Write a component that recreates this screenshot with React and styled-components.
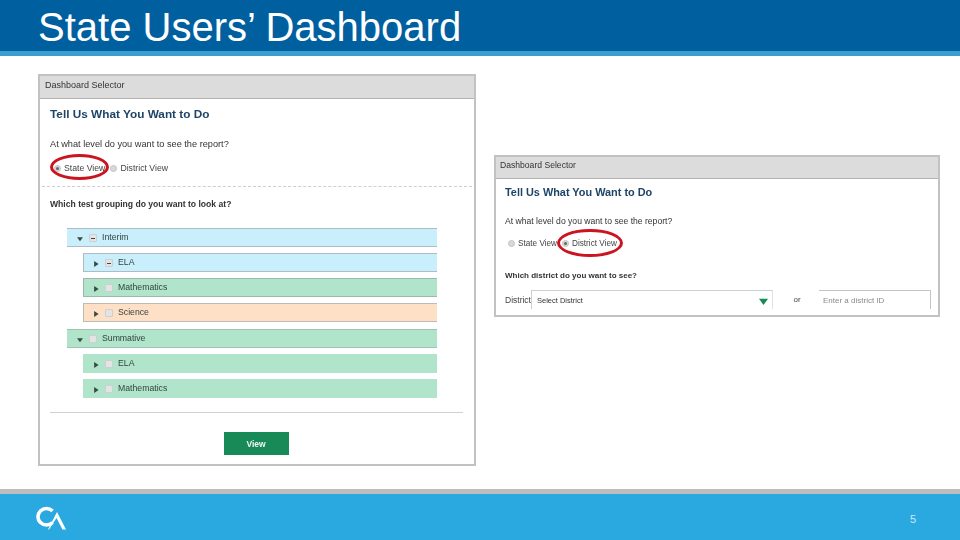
import styled, { createGlobalStyle } from "styled-components"

const GlobalStyle = createGlobalStyle`
  html, body {
    margin: 0;
    padding: 0;
    background: #fff;
  }
  * {
    box-sizing: border-box;
  }
`

const Slide = styled.div`
  width: 960px;
  height: 540px;
  display: flex;
  flex-direction: column;
  font-family: "Liberation Sans", Arial, sans-serif;
  overflow: hidden;
`

const Header = styled.header`
  height: 56px;
  flex-shrink: 0;
  background: #00609f;
  border-bottom: 5px solid #3a9fd0;
  padding-left: 38px;
`

const SlideTitle = styled.h1`
  margin: 0;
  font-size: 40px;
  font-weight: 400;
  line-height: 54px;
  color: #fff;
`

const Main = styled.main`
  flex: 1;
  display: flex;
  align-items: flex-start;
  gap: 18px;
  padding: 18px 20px 0 38px;
`

const Panel = styled.section`
  width: ${props => props.$width}px;
  height: ${props => props.$height}px;
  margin-top: ${props => props.$top || 0}px;
  flex-shrink: 0;
  display: flex;
  flex-direction: column;
  border: 2px solid #c2c2c2;
  background: #fff;
  filter: blur(0.45px);
`

const PanelHeader = styled.div`
  height: ${props => props.$height}px;
  flex-shrink: 0;
  display: flex;
  align-items: center;
  padding: 0 0 5px ${props => props.$left}px;
  background: #dcdcdc;
  border-bottom: 1px solid #b4b4b4;
  font-size: ${props => props.$size}px;
  color: #333;
`

const PanelBody = styled.div`
  flex: 1;
  display: flex;
  flex-direction: column;
  padding: ${props => props.$padding};
`

const Heading = styled.h2`
  margin: 0;
  font-size: ${props => props.$size}px;
  line-height: 14px;
  font-weight: 700;
  color: #1e4468;
`

const Question = styled.p`
  margin: ${props => props.$top}px 0 0;
  font-size: ${props => props.$size}px;
  line-height: 12px;
  font-weight: ${props => (props.$bold ? 700 : 400)};
  color: #333;
`

const RadioRow = styled.div`
  margin: ${props => props.$top}px 0 0 ${props => props.$left || 0}px;
  display: flex;
  align-items: center;
  height: 12px;
  font-size: ${props => props.$size}px;
  color: #444;
`

const Radio = styled.span`
  position: relative;
  width: 7px;
  height: 7px;
  margin-right: 3px;
  flex-shrink: 0;
  border-radius: 50%;
  background: #d8d8d8;
  border: 1px solid #c4c4c4;

  &::after {
    content: "";
    display: ${props => (props.$checked ? "block" : "none")};
    position: absolute;
    inset: 1px;
    border-radius: 50%;
    background: #666;
  }
`

const RadioLabel = styled.span`
  position: relative;
  margin-right: ${props => props.$gap}px;
`

const Circled = styled.span`
  position: absolute;
  left: ${props => props.$left}px;
  top: ${props => props.$top}px;
  width: ${props => props.$width}px;
  height: ${props => props.$height}px;
  border: 3px solid #cc1420;
  border-radius: 50%;
  pointer-events: none;
`

const DashedRule = styled.div`
  margin: 12px -8px 0 -8px;
  border-top: 1px dashed #cfcfcf;
`

const Tree = styled.div`
  margin: 18px 0 0 17px;
  width: 370px;
  display: flex;
  flex-direction: column;
`

const TreeRow = styled.div`
  height: 19px;
  margin-left: ${props => (props.$child ? 16 : 0)}px;
  margin-top: ${props => props.$gap}px;
  display: flex;
  align-items: center;
  padding-left: ${props => (props.$child ? 9 : 10)}px;
  background: ${props => props.$bg};
  border-top: 1px solid ${props => props.$line};
  border-bottom: 1px solid ${props => props.$line};
  border-left: ${props => (props.$child ? `1px solid ${props.$line}` : "none")};
  font-size: 8.7px;
  color: #33423c;
`

const Box = styled.span`
  width: 8px;
  height: 8px;
  margin: 1px 4px 0 6px;
  flex-shrink: 0;
  display: flex;
  align-items: center;
  justify-content: center;
  background: #e4e4e4;
  border: 1px solid #cfcfcf;
  border-radius: 1px;

  &::after {
    content: "";
    display: ${props => (props.$partial ? "block" : "none")};
    width: 4px;
    height: 1px;
    background: #444;
  }
`

const RowLabel = styled.span`
  margin: -2px 0 0 1px;
`

const FooterRule = styled.div`
  margin: 14px 1px 0 0;
  border-top: 1px solid #d0d0d0;
`

const ViewButton = styled.button`
  align-self: center;
  margin: 19px 2px 0 0;
  width: 65px;
  height: 23px;
  border: none;
  padding: 0;
  background: #188a57;
  color: #f0f7f3;
  font-family: inherit;
  font-size: 8.5px;
  font-weight: 700;
`

const DistrictRow = styled.div`
  margin-top: 8px;
  display: flex;
  align-items: center;
  font-size: 8.5px;
  color: #444;
`

const DistrictLabel = styled.span`
  width: 26px;
  flex-shrink: 0;
`

const SelectBox = styled.div`
  width: 242px;
  height: 19px;
  flex-shrink: 0;
  display: flex;
  align-items: center;
  justify-content: space-between;
  padding: 0 4px 0 5px;
  border-top: 1px solid #cfcfcf;
  border-left: 1px solid #cfcfcf;
  border-right: 1px solid #e2e2e2;
  font-size: 7.5px;
  color: #333;
`

const OrText = styled.span`
  width: 46px;
  flex-shrink: 0;
  padding-left: 2px;
  text-align: center;
  font-size: 8px;
`

const IdInput = styled.div`
  width: 112px;
  height: 19px;
  flex-shrink: 0;
  display: flex;
  align-items: center;
  padding-left: 4px;
  border-top: 1px solid #c4c4c4;
  border-right: 1px solid #c4c4c4;
  font-size: 8px;
  color: #8a8a8a;
`

const Footer = styled.footer`
  height: 51px;
  flex-shrink: 0;
  display: flex;
  align-items: center;
  justify-content: space-between;
  padding: 3px 44px 0 36px;
  background: #29a9e0;
  border-top: 5px solid #bdbdbd;
`

const PageNumber = styled.span`
  font-size: 11px;
  color: #cde9f7;
`

const Triangle = ({ open, color = "#3c4a44", size = 6 }) => (
  <svg width={size} height={size} viewBox="0 0 8 8" style={{ flexShrink: 0, marginTop: 3 }}>
    <path d={open ? "M0 1.5H8L4 7Z" : "M1.5 0L7.5 4L1.5 8Z"} fill={color} />
  </svg>
)

const Logo = () => (
  <svg width="31" height="25" viewBox="0 0 31 25">
    <path d="M16.5 5A8.5 8.2 0 1 0 16.5 16.5" fill="none" stroke="#fff" strokeWidth="3.6" />
    <path d="M12 23.5L21 6L30 23.5H26.5L20.5 12L13 23.5Z" fill="#fff" />
  </svg>
)

const rows = [
  { label: "Interim", open: true, bg: "#c9eefc", line: "#b0bcc2", partial: true, gap: 0 },
  { label: "ELA", child: true, bg: "#c9eefc", line: "#b0bcc2", partial: true, gap: 6 },
  { label: "Mathematics", child: true, bg: "#b0e4cb", line: "#a0b8ac", gap: 6 },
  { label: "Science", child: true, bg: "#fde0c6", line: "#bcbcb4", gap: 6 },
  { label: "Summative", open: true, bg: "#b0e4cb", line: "#a0c4b0", gap: 7 },
  { label: "ELA", child: true, bg: "#b0e4cb", line: "#b0e4cb", gap: 6 },
  { label: "Mathematics", child: true, bg: "#b0e4cb", line: "#b0e4cb", gap: 6 },
]

const App = () => {
  return (
    <Slide>
      <GlobalStyle />
      <Header>
        <SlideTitle>State Users’ Dashboard</SlideTitle>
      </Header>
      <Main>
        <Panel $width={438} $height={392}>
          <PanelHeader $height={23} $left={5} $size={9}>Dashboard Selector</PanelHeader>
          <PanelBody $padding="8px 10px 0 10px">
            <Heading $size={11.8}>Tell Us What You Want to Do</Heading>
            <Question $top={17} $size={9.2}>At what level do you want to see the report?</Question>
            <RadioRow $top={12} $left={4} $size={8.7}>
              <Radio $checked />
              <RadioLabel $gap={5}>
                State View
                <Circled $left={-14} $top={-9} $width={59} $height={26} />
              </RadioLabel>
              <Radio />
              <RadioLabel $gap={0}>District View</RadioLabel>
            </RadioRow>
            <DashedRule />
            <Question $top={11} $bold $size={8.6}>Which test grouping do you want to look at?</Question>
            <Tree>
              {rows.map((row, i) => (
                <TreeRow key={i} $child={row.child} $bg={row.bg} $line={row.line} $gap={row.gap}>
                  <Triangle open={row.open} />
                  <Box $partial={row.partial} />
                  <RowLabel>{row.label}</RowLabel>
                </TreeRow>
              ))}
            </Tree>
            <FooterRule />
            <ViewButton>View</ViewButton>
          </PanelBody>
        </Panel>
        <Panel $width={446} $height={162} $top={81}>
          <PanelHeader $height={22} $left={4} $size={8.6}>Dashboard Selector</PanelHeader>
          <PanelBody $padding="6px 7px 0 9px">
            <Heading $size={10.9}>Tell Us What You Want to Do</Heading>
            <Question $top={16} $size={8.6}>At what level do you want to see the report?</Question>
            <RadioRow $top={10} $left={3} $size={8.2}>
              <Radio />
              <RadioLabel $gap={5}>State View</RadioLabel>
              <Radio $checked />
              <RadioLabel $gap={0}>
                District View
                <Circled $left={-15} $top={-10} $width={66} $height={28} />
              </RadioLabel>
            </RadioRow>
            <Question $top={21} $bold $size={8}>Which district do you want to see?</Question>
            <DistrictRow>
              <DistrictLabel>District</DistrictLabel>
              <SelectBox>
                Select District
                <Triangle open color="#188a57" size={9} />
              </SelectBox>
              <OrText>or</OrText>
              <IdInput>Enter a district ID</IdInput>
            </DistrictRow>
          </PanelBody>
        </Panel>
      </Main>
      <Footer>
        <Logo />
        <PageNumber>5</PageNumber>
      </Footer>
    </Slide>
  )
}

export default App
